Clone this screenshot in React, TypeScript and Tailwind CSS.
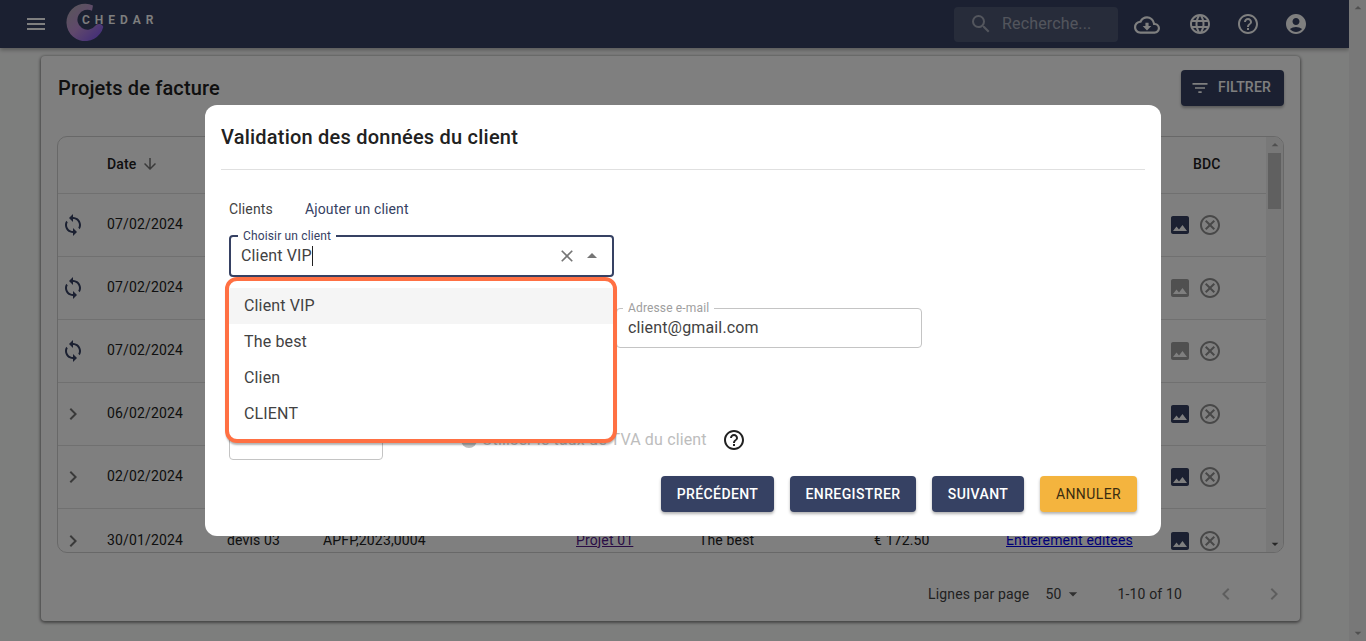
import React from "react";
import {
  MdMenu, MdSearch, MdOutlineCloudDownload, MdLanguage, MdHelpOutline, MdAccountCircle,
  MdFilterList, MdImage, MdOutlineCancel, MdSync, MdChevronRight, MdArrowDownward,
  MdClose, MdArrowDropUp, MdArrowDropDown,
} from "react-icons/md";

const rows = [
  { date: "07/02/2024", sync: true, hasOrder: true },
  { date: "07/02/2024", sync: true, hasOrder: false },
  { date: "07/02/2024", sync: true, hasOrder: false },
  { date: "06/02/2024", sync: false, hasOrder: true },
  { date: "02/02/2024", sync: false, hasOrder: true },
  { date: "30/01/2024", sync: false, hasOrder: true, devis: "devis 03", ref: "APFP,2023,0004", projet: "Projet 01", client: "The best", total: "€ 172.50", statut: "Entièrement éditées" },
];

const grid = "grid grid-cols-[49px_120px_96px_253px_123px_175px_132px_162px_99px] items-center";
const cell = "pb-[2px]";
const actionButton = "h-9 rounded text-sm tracking-[0.4px] shadow-[0_2px_3px_rgba(0,0,0,0.3)]";

function Logo() {
  return (
    <div className="relative ml-[18px] h-12 w-[100px]">
      <svg className="absolute left-0 top-0" width="48" height="48" viewBox="66 0 48 48">
        <defs>
          <linearGradient id="ring" x1="0.1" y1="0.1" x2="0.85" y2="0.9">
            <stop offset="0" stopColor="#b4aab8" />
            <stop offset="0.5" stopColor="#c090d8" />
            <stop offset="1" stopColor="#8a60f0" />
          </linearGradient>
        </defs>
        <path
          d="M93 5.4A18.7 18.7 0 1 0 103.3 27A4.6 4.6 0 0 0 95.5 25.6A10 10 0 1 1 92 10.8Z"
          fill="url(#ring)"
        />
      </svg>
      <span className="absolute left-[16px] top-[11px] text-[12px] font-semibold tracking-[5px] text-white">CHEDAR</span>
    </div>
  );
}

function Header() {
  return (
    <header className="flex h-12 items-center bg-[#364163] pl-[24px] pr-[41px] text-white shadow-[0_2px_4px_rgba(0,0,0,0.3)]">
      <MdMenu size={24} />
      <Logo />
      <div className="ml-auto flex h-[35px] w-[164px] items-center gap-[9px] rounded bg-[#4e5875] pl-[15px] text-white/50">
        <MdSearch size={24} />
        <span className="text-base">Recherche...</span>
      </div>
      <MdOutlineCloudDownload size={26} className="ml-[16px] mt-[2px]" />
      <MdLanguage size={24} className="ml-[28px]" />
      <MdHelpOutline size={24} className="ml-[24px]" />
      <MdAccountCircle size={24} className="ml-[24px]" />
    </header>
  );
}

function Table() {
  return (
    <div className="relative mx-4 mt-[30px] flex h-[417px] overflow-hidden rounded-[10px] border border-[#d0d0d0]">
      <div className="min-w-0 flex-1">
        <div className={`${grid} h-[57px] border-b border-[#e0e0e0] pb-[3px] text-sm font-medium text-[#212121]`}>
          <span />
          <span className="flex items-center gap-[5px]">Date <MdArrowDownward size={18} className="text-[#757575]" /></span>
          <span /><span /><span /><span /><span /><span />
          <span className="pl-[25px]">BDC</span>
        </div>
        {rows.map((r, i) => (
          <div key={i} className={`${grid} h-[63px] ${i < rows.length - 1 ? "border-b border-[#e0e0e0]" : ""} text-sm text-[#212121]`}>
            <span className="pl-[3px]">
              {r.sync ? <MdSync size={24} className="text-[#364163]" /> : <MdChevronRight size={24} className="text-[#757575]" />}
            </span>
            <span className={cell}>{r.date}</span>
            <span className={cell}>{r.devis}</span>
            <span className={cell}>{r.ref}</span>
            <span className={cell}><a className="text-[#551a8b] underline">{r.projet}</a></span>
            <span className={cell}>{r.client}</span>
            <span className={cell}>{r.total}</span>
            <span className={cell}><a className="text-[#0000ee] underline">{r.statut}</a></span>
            <span className="flex items-center gap-[6px]">
              <MdImage size={24} className={r.hasOrder ? "text-[#364163]" : "text-[#a0a0a0]"} />
              <MdOutlineCancel size={24} className="text-[#909090]" />
            </span>
          </div>
        ))}
      </div>
      <div className="flex w-[17px] flex-col items-center bg-[#f1f1f1]">
        <MdArrowDropUp size={16} className="text-[#a0a0a0]" />
        <div className="h-14 w-[13px] bg-[#c1c1c1]" />
        <div className="flex-1" />
        <MdArrowDropDown size={16} className="text-[#505050]" />
      </div>
    </div>
  );
}

function Page() {
  return (
    <div className="flex h-[641px] w-full overflow-hidden bg-[#fbfcfb]">
      <div className="min-w-0 flex-1">
        <Header />
        <main className="ml-[41px] mr-[49px] mt-2 h-[565px] rounded bg-white shadow-[0_1px_3px_1px_rgba(0,0,0,0.45)]">
          <div className="flex items-start justify-between pl-[17px] pr-4 pt-[14px]">
            <h1 className="pt-[5px] text-xl font-medium leading-[26px] tracking-[0.15px] text-[#212121]">Projets de facture</h1>
            <button className="flex h-9 w-[103px] items-center gap-2 rounded bg-[#364163] pl-[9px] text-sm font-medium tracking-[0.2px] text-white shadow-[0_2px_3px_rgba(0,0,0,0.3)]">
              <MdFilterList size={20} />
              <span className="pb-[2px]">FILTRER</span>
            </button>
          </div>
          <Table />
          <div className="mt-[29px] flex items-center pr-[14px] text-sm text-[#424242]">
            <span className="ml-auto">Lignes par page</span>
            <span className="ml-[16px] flex items-center gap-[2px]">50<MdArrowDropDown size={20} className="text-[#616161]" /></span>
            <span className="ml-[34px]">1-10 of 10</span>
            <MdChevronRight size={24} className="ml-[32px] rotate-180 text-[#bdbdbd]" />
            <MdChevronRight size={24} className="ml-6 text-[#bdbdbd]" />
          </div>
        </main>
      </div>
      <div className="flex w-[17px] flex-col items-center bg-[#f1f1f1]">
        <MdArrowDropUp size={16} className="text-[#a0a0a0]" />
        <div className="flex-1" />
        <MdArrowDropDown size={16} className="text-[#a0a0a0]" />
      </div>
    </div>
  );
}

function Field({ label, value, className }: { label: string; value?: string; className: string }) {
  return (
    <div className={`relative h-10 rounded border border-[#c4c4c4] ${className}`}>
      {label && <span className="absolute -top-[8px] left-[6px] bg-white px-[5px] text-xs leading-[14px] text-[#9e9e9e]">{label}</span>}
      {value && <span className="absolute left-[11px] top-[9px] text-base leading-[20px] text-[#424242]">{value}</span>}
    </div>
  );
}

function Modal() {
  return (
    <div className="absolute left-[205px] top-[105px] h-[431px] w-[956px] rounded-xl bg-white px-4 pt-[18px]">
      <h2 className="text-xl font-medium leading-[28px] tracking-[0.22px] text-[#212121]">Validation des données du client</h2>
      <div className="mt-[18px] border-t border-[#e0e0e0]" />
      <div className="mt-[29px] flex gap-8 pl-2 text-sm leading-[20px]">
        <span className="text-[#424242]">Clients</span>
        <span className="text-[#364163]">Ajouter un client</span>
      </div>
      <div className="relative ml-2 mt-4 h-[42px] w-[385px] rounded border-2 border-[#364163]">
        <span className="absolute -top-[8px] left-[7px] bg-white px-[5px] text-xs leading-[14px] text-[#364163]">Choisir un client</span>
        <span className="absolute left-[10px] top-[9px] border-r border-[#212121] text-base leading-[20px] text-[#424242]">Client VIP</span>
        <MdClose size={20} className="absolute right-[35px] top-[9px] text-[#757575]" />
        <MdArrowDropUp size={24} className="absolute right-[8px] top-[7px] text-[#757575]" />
      </div>
      <div className="ml-[395px] mt-[31px]">
        <Field label="Adresse e-mail" value="client@gmail.com" className="w-[306px]" />
      </div>
      <div className="mt-[72px] flex items-end pl-2">
        <Field label="" className="w-[154px]" />
        <div className="mb-[8px] ml-[78px] flex items-center gap-[5px]">
          <span className="h-4 w-4 rounded-full bg-[#bdbdbd]" />
          <span className="text-base leading-[20px] text-[#bdbdbd]">Utiliser le taux de TVA du client</span>
          <MdHelpOutline size={24} className="ml-[10px] text-[#212121]" />
        </div>
      </div>
      <div className="mt-4 flex justify-end gap-4 pr-2">
        <button className={`${actionButton} w-[113px] bg-[#364163] font-medium text-white`}>PRÉCÉDENT</button>
        <button className={`${actionButton} w-[126px] bg-[#364163] font-medium text-white`}>ENREGISTRER</button>
        <button className={`${actionButton} w-[92px] bg-[#364163] font-medium text-white`}>SUIVANT</button>
        <button className={`${actionButton} w-[97px] bg-[#f4b43e] text-[#3a2c10]`}>ANNULER</button>
      </div>

      {/* open autocomplete list with its orange outline */}
      <div className="absolute left-[20px] top-[172px] h-[166px] w-[392px] rounded-[12px] border-4 border-[#ff7043] bg-white pt-[7px] text-base text-[#424242] shadow-[0_3px_2px_-1px_rgba(0,0,0,0.3)]">
        <div className="flex h-9 items-center bg-[#f5f5f5] pl-[15px]">Client VIP</div>
        <div className="flex h-9 items-center pl-[15px]">The best</div>
        <div className="flex h-9 items-center pl-[15px]">Clien</div>
        <div className="flex h-9 items-center pl-[15px]">CLIENT</div>
      </div>
    </div>
  );
}

export default function App() {
  return (
    <div className="relative h-[641px] overflow-hidden font-['Roboto',sans-serif] tracking-[0.15px]">
      <Page />
      <div className="absolute inset-0 bg-black/50" />
      <Modal />
    </div>
  );
}
